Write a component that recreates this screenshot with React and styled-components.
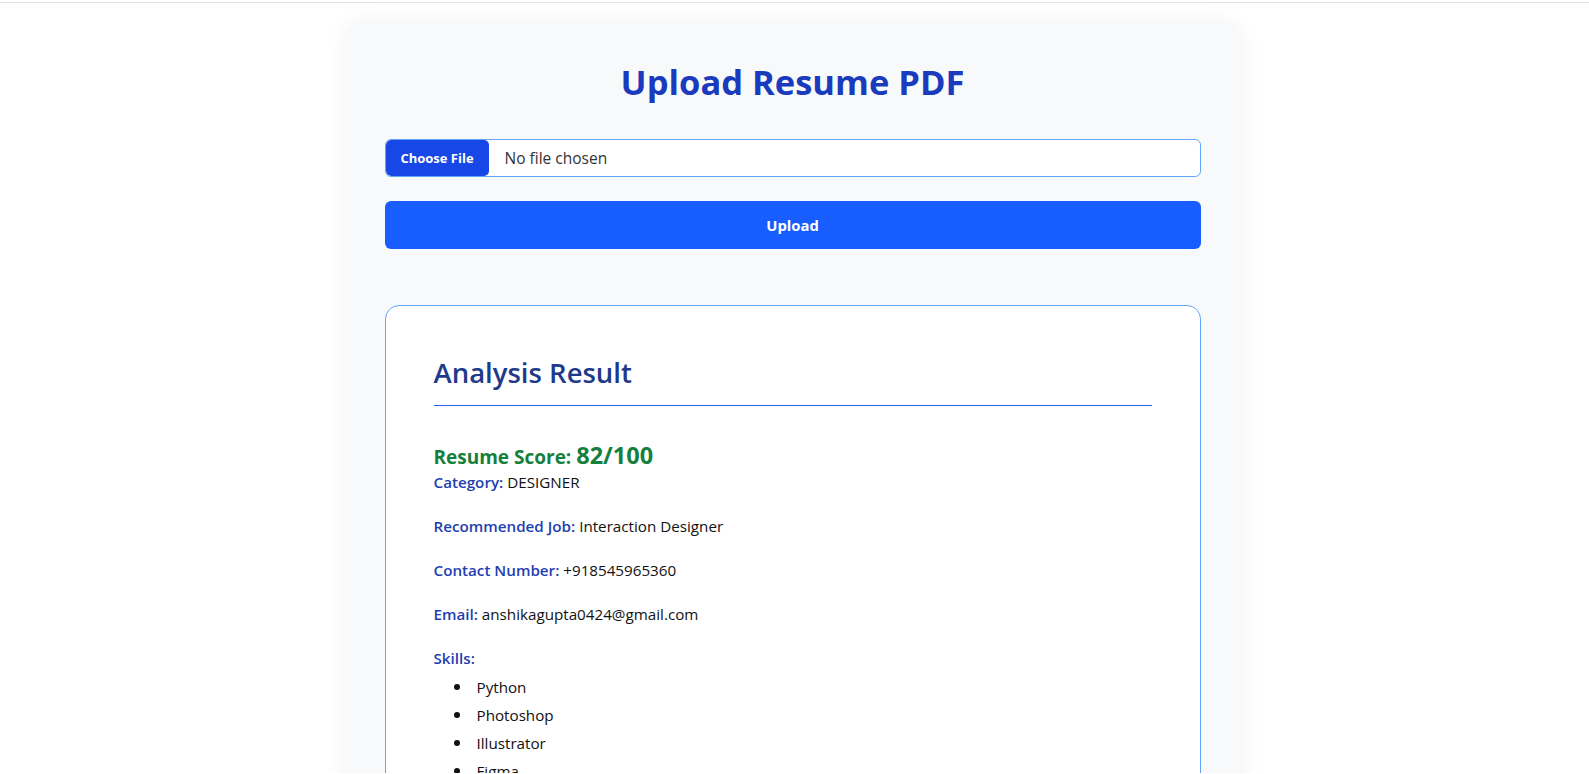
import React from 'react';
import styled, { createGlobalStyle } from 'styled-components';

const GlobalStyle = createGlobalStyle`
  html, body {
    margin: 0;
    padding: 0;
    background: #ffffff;
  }
  body {
    margin-top: 2px;
    border-top: 1px solid #e3e3e3;
    font-family: "Open Sans", "Noto Sans", sans-serif;
    height: 771px;
    overflow: hidden;
  }
  * {
    box-sizing: border-box;
  }
`;

const Page = styled.main`
  display: flex;
  justify-content: center;
  padding: 16px 4px 0 0;
`;

const UploadCard = styled.section`
  width: 896px;
  background: #f8f9fb;
  border-radius: 20px;
  box-shadow: 0 4px 24px rgba(0, 0, 0, 0.06);
  padding: 39px 40px 60px;
  display: flex;
  flex-direction: column;
`;

const Title = styled.h1`
  margin: 0 0 34px;
  text-align: center;
  font-size: 34.5px;
  font-weight: 700;
  color: #1a3bbd;
`;

const FileField = styled.label`
  display: flex;
  align-items: center;
  height: 38px;
  background: #ffffff;
  border: 1px solid #60a5fa;
  border-radius: 6px;
  overflow: hidden;
`;

const ChooseButton = styled.span`
  display: flex;
  align-items: center;
  justify-content: center;
  width: 103px;
  height: 100%;
  background: #1747e6;
  color: #ffffff;
  font-size: 13px;
  font-weight: 700;
  border-radius: 5px;
`;

const FileName = styled.span`
  margin-left: 16px;
  font-size: 15.5px;
  color: #333333;
`;

const UploadButton = styled.button`
  margin-top: 24px;
  height: 48px;
  border: none;
  border-radius: 6px;
  background: #175dff;
  color: #ffffff;
  font-family: inherit;
  font-size: 14.8px;
  font-weight: 700;
`;

const ResultBox = styled.div`
  margin-top: 56px;
  background: #ffffff;
  border: 1px solid #60a5fa;
  border-radius: 14px;
  padding: 48px 48px 40px;
`;

const ResultHeading = styled.h2`
  margin: 0;
  padding-bottom: 14px;
  border-bottom: 1px solid #2563eb;
  font-size: 27.5px;
  font-weight: 600;
  color: #1e3a8a;
`;

const Score = styled.h3`
  margin: 34px 0 0;
  font-size: 19px;
  font-weight: 700;
  color: #15803d;
  line-height: 1.3;
`;

const ScoreValue = styled.span`
  font-size: 23.5px;
`;

const Field = styled.p`
  margin: 0 0 ${p => (p.$tight ? '3px' : '21px')};
  font-size: 15.2px;
  line-height: 23px;
  color: #111111;
`;

const Label = styled.strong`
  font-weight: 600;
  color: #1e40af;
`;

const SkillList = styled.ul`
  margin: 0;
  padding-left: 20px;
  list-style: none;
  font-size: 15.2px;
  color: #111111;
`;

const Skill = styled.li`
  display: flex;
  align-items: center;
  line-height: 28px;

  &::before {
    content: '';
    width: 6px;
    height: 6px;
    margin-right: 17px;
    border-radius: 50%;
    background: #111111;
  }
`;

const result = {
  score: 82,
  category: 'DESIGNER',
  job: 'Interaction Designer',
  phone: '+918545965360',
  email: 'anshikagupta0424@gmail.com',
  skills: ['Python', 'Photoshop', 'Illustrator', 'Figma'],
};

export default function App() {
  return (
    <>
      <GlobalStyle />
      <Page>
        <UploadCard>
          <Title>Upload Resume PDF</Title>
          <FileField>
            <ChooseButton>Choose File</ChooseButton>
            <FileName>No file chosen</FileName>
          </FileField>
          <UploadButton>Upload</UploadButton>

          <ResultBox>
            <ResultHeading>Analysis Result</ResultHeading>
            <Score>
              Resume Score: <ScoreValue>{result.score}/100</ScoreValue>
            </Score>
            <Field>
              <Label>Category:</Label> {result.category}
            </Field>
            <Field>
              <Label>Recommended Job:</Label> {result.job}
            </Field>
            <Field>
              <Label>Contact Number:</Label> {result.phone}
            </Field>
            <Field>
              <Label>Email:</Label> {result.email}
            </Field>
            <Field $tight>
              <Label>Skills:</Label>
            </Field>
            <SkillList>
              {result.skills.map(s => (
                <Skill key={s}>{s}</Skill>
              ))}
            </SkillList>
          </ResultBox>
        </UploadCard>
      </Page>
    </>
  );
}
